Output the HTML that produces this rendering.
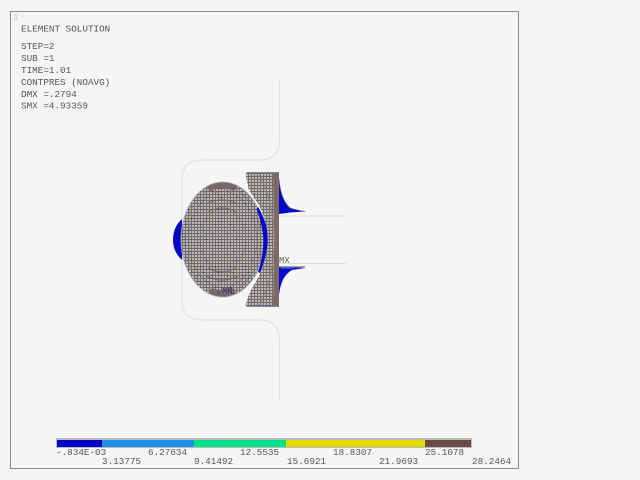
<!DOCTYPE html>
<html>
<head>
<meta charset="utf-8">
<style>
html,body{margin:0;padding:0;background:#f5f5f3;width:640px;height:480px;overflow:hidden}
svg{display:block;position:absolute;left:0;top:0}
text{font-family:"Liberation Mono",monospace;font-size:9.3px;fill:#555}
</style>
</head>
<body>
<svg width="640" height="480" viewBox="0 0 640 480">
<defs>
<pattern id="g" width="3" height="3" patternUnits="userSpaceOnUse">
<rect width="3" height="3" fill="#bababa"/>
<rect x="2" width="1" height="3" fill="#78706f"/>
<rect y="2" width="3" height="1" fill="#746866"/>
</pattern>
<pattern id="d" width="15" height="21" patternUnits="userSpaceOnUse">
<rect x="2" y="2" width="1" height="1" fill="#2a3a80"/>
<rect x="11" y="8" width="1" height="1" fill="#2a3a80"/>
<rect x="5" y="14" width="1" height="1" fill="#2a3a80"/>
<rect x="8" y="20" width="1" height="1" fill="#2a3a80"/>
</pattern>
<clipPath id="ec"><ellipse cx="222.8" cy="239.5" rx="41.8" ry="57.5"/></clipPath>
</defs>
<rect width="640" height="480" fill="#f5f5f3"/>
<rect x="10.5" y="11.5" width="508" height="457" fill="none" stroke="#8a8a8a" stroke-width="1"/>

<!-- geometry outline -->
<g fill="none" stroke="#dedede" stroke-width="1">
<path d="M279.5 80V140Q279.5 160 259 160H202Q182 160 182 180V300Q182 320 202 320H259Q279.5 320 279.5 340V400"/>
<path d="M280 216H346M280 263.5H346"/>
</g>

<!-- left blue -->
<path d="M182 219Q173 227 173 240Q173 252 182 260Z" fill="#0808c8"/>
<path d="M175 230H182M174.5 234H182M174.5 238H182" stroke="#00006a" stroke-width=".6"/>

<!-- ball -->
<ellipse cx="222.8" cy="239.5" rx="41.8" ry="57.5" fill="url(#g)"/>
<g clip-path="url(#ec)" fill="none" stroke="#75625f" stroke-width=".8">
<ellipse cx="222.8" cy="239.5" rx="38" ry="53" opacity=".5"/>
<ellipse cx="222.8" cy="239.5" rx="34" ry="48" opacity=".5"/>
<ellipse cx="222.8" cy="239.5" rx="23" ry="30" opacity=".35"/>
<path d="M206 186Q222 178 238 186L234 191Q222 186 210 191Z" fill="#7a6662" stroke="none"/>
<path d="M208 293Q222 301 236 293L232 288Q222 292 212 288Z" fill="#7a6662" stroke="none"/>
<path d="M206 204Q222 196 238 204M208 212Q222 204 236 212M206 276Q222 284 238 276M208 268Q222 276 236 268" stroke-width="1.3" opacity=".8"/>
<rect x="180" y="180" width="90" height="120" fill="url(#d)" stroke="none"/>
</g>
<ellipse cx="222.8" cy="239.5" rx="41.8" ry="57.5" fill="none" stroke="#9fb4c8" stroke-width=".8"/>

<!-- block -->
<path d="M247 172H279V307H247Q245 306 246 303L250 292L255 283L260 274L264 263Q268.5 240 264 217L259 205L254 198L249 190L246 177Q245.5 172 247 172Z" fill="url(#g)"/>
<path d="M273 172H279V307H273Q275 240 273 172Z" fill="#7d6a66"/>
<path d="M247 172.5H279M247 306.5H279" stroke="#7c86b0" stroke-width="1"/>
<path d="M258 172Q272 195 275 240Q272 285 258 307" fill="none" stroke="#8a7a76" stroke-width="1"/>

<!-- right crescent -->
<path d="M258 207Q269 224 267.5 245Q265 262 260 273L258 272Q263 258 263.5 240Q262 222 256.5 209Z" fill="#0808c8"/>

<!-- spikes -->
<path d="M279 178Q281 200 290 208Q296 210 305 211.5L290 212.5L279 214Z" fill="#0808c8"/>
<path d="M279 180Q281 200 290 208Q296 210 305 211.5" fill="none" stroke="#5a6080" stroke-width=".7"/>
<path d="M279 267V295Q281 276 292 270L305 268Z" fill="#0808c8"/>
<path d="M279 267H305" stroke="#444a70" stroke-width="1"/>
<path d="M281 268H294" stroke="#1e90e8" stroke-width="1"/>

<text x="279" y="263" style="font-size:9px;fill:#666">MX</text>
<text x="222" y="293.5" style="font-size:9px;fill:#2a3470">MN</text>

<text x="13" y="20" style="fill:#a6e8ee;font-weight:bold">1</text>
<text x="21" y="31.5">ELEMENT SOLUTION</text>
<text x="21" y="49">STEP=2</text>
<text x="21" y="61">SUB =1</text>
<text x="21" y="73">TIME=1.01</text>
<text x="21" y="85">CONTPRES (NOAVG)</text>
<text x="21" y="97">DMX =.2794</text>
<text x="21" y="108.5">SMX =4.93359</text>

<!-- legend -->
<rect x="56" y="438" width="416" height="10" fill="#bdbdbd"/>
<rect x="57" y="440" width="45" height="7" fill="#0000c8"/>
<rect x="102" y="440" width="92" height="7" fill="#1e90e6"/>
<rect x="194" y="440" width="92" height="7" fill="#00e088"/>
<rect x="286" y="440" width="139" height="7" fill="#e0dc00"/>
<rect x="425" y="440" width="46" height="7" fill="#6a4a44"/>

<text x="56" y="455">-.834E-03</text>
<text x="148" y="455">6.27634</text>
<text x="240" y="455">12.5535</text>
<text x="333" y="455">18.8307</text>
<text x="425" y="455">25.1078</text>
<text x="102" y="464">3.13775</text>
<text x="194" y="464">9.41492</text>
<text x="287" y="464">15.6921</text>
<text x="379" y="464">21.9693</text>
<text x="472" y="464">28.2464</text>
</svg>
</body>
</html>
